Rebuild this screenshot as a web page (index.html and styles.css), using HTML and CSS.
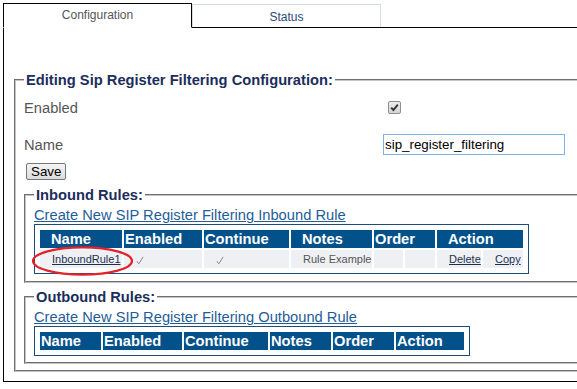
FILE: index.html
```html
<!DOCTYPE html>
<html lang="en">
<head>
<meta charset="utf-8">
<title>Sip Register Filtering</title>
<link rel="stylesheet" href="styles.css">
</head>
<body>
<div class="page">
  <div class="tabs">
    <div class="tab tab-active">Configuration</div>
    <div class="tab tab-idle">Status</div>
  </div>
  <div class="panel">
    <fieldset class="fs fs-outer">
      <legend class="lg">Editing Sip Register Filtering Configuration:</legend>
      <div class="form">
        <div class="label">Enabled</div>
        <div class="value">
          <span class="chk"><svg width="11" height="11" viewBox="0 0 11 11"><path d="M2.2 5.6 L4.4 8 L8.8 2.6" fill="none" stroke="#333" stroke-width="1.9"/></svg></span>
        </div>
        <div class="label">Name</div>
        <div class="value"><input class="text" type="text" value="sip_register_filtering"></div>
      </div>
      <button class="btn" type="button">Save</button>

      <fieldset class="fs fs-inner fs-in">
        <legend class="lg">Inbound Rules:</legend>
        <a class="create" href="#">Create New SIP Register Filtering Inbound Rule</a>
        <table class="rules">
          <thead>
            <tr>
              <th class="pad">Name</th>
              <th>Enabled</th>
              <th>Continue</th>
              <th class="pad">Notes</th>
              <th colspan="2">Order</th>
              <th colspan="2" class="pad">Action</th>
            </tr>
          </thead>
          <tbody>
            <tr>
              <td class="w-name mark-cell"><a class="cell-link" href="#">InboundRule1</a><svg class="mark" width="103" height="32" viewBox="0 0 103 32"><ellipse cx="51.5" cy="16" rx="49.5" ry="13.6" fill="none" stroke="#e1232b" stroke-width="2.2"/></svg></td>
              <td class="w-en"><svg class="tick" width="8" height="9" viewBox="0 0 8 9"><path d="M0.8 5.2 L2.8 7.8 L7.2 0.8" fill="none" stroke="#8a8a8a" stroke-width="1"/></svg></td>
              <td class="w-co"><svg class="tick" width="8" height="9" viewBox="0 0 8 9"><path d="M0.8 5.2 L2.8 7.8 L7.2 0.8" fill="none" stroke="#8a8a8a" stroke-width="1"/></svg></td>
              <td class="w-no note">Rule Example</td>
              <td class="w-o1"></td>
              <td class="w-o2"></td>
              <td class="w-del"><a class="cell-link" href="#">Delete</a></td>
              <td class="w-cp"><a class="cell-link" href="#">Copy</a></td>
            </tr>
          </tbody>
        </table>
      </fieldset>

      <fieldset class="fs fs-inner fs-out">
        <legend class="lg">Outbound Rules:</legend>
        <a class="create" href="#">Create New SIP Register Filtering Outbound Rule</a>
        <table class="rules">
          <thead>
            <tr>
              <th class="o-name">Name</th>
              <th class="o-en">Enabled</th>
              <th class="o-co">Continue</th>
              <th class="o-no">Notes</th>
              <th class="o-or">Order</th>
              <th class="o-ac">Action</th>
            </tr>
          </thead>
        </table>
      </fieldset>
    </fieldset>
  </div>
</div>
</body>
</html>
```

FILE: styles.css
```css
html, body {
  margin: 0;
  padding: 0;
  background: #fff;
  overflow: hidden;
}

body {
  font-family: "Liberation Sans", Arial, sans-serif;
  font-size: 14.7px;
  color: #555;
}

.page {
  padding: 3px 0 0 3px;
  width: 680px;
}

/* Tabs */
.tabs {
  display: flex;
  height: 24px;
}

.tab {
  box-sizing: border-box;
  width: 189px;
  display: flex;
  align-items: center;
  justify-content: center;
  font-size: 12px;
  background: #fff;
}

.tab-active {
  height: 25px;
  border: 1px solid #000;
  border-bottom: 1px solid #fff;
  color: #555;
  position: relative;
  z-index: 1;
  padding-bottom: 1px;
}

.tab-idle {
  margin-top: 1px;
  height: 23px;
  border: 1px solid #d5dae6;
  border-bottom: none;
  color: #2c4a77;
  padding-top: 1px;
}

/* Panel */
.panel {
  border: 1px solid #000;
  border-right: none;
  padding: 0 0 9px 10px;
}

/* Fieldsets */
.fs {
  margin: 0;
  min-width: 0;
  border: 2px groove #c4c4c4;
  padding: 0 0 6px 8px;
}

.fs-outer {
  margin-top: 43px;
  padding-bottom: 6px;
}

.fs-in {
  margin-top: 6px;
  padding-bottom: 7px;
}

.fs-out {
  margin-top: 5px;
  padding-bottom: 6px;
}

.lg {
  padding: 0 2px;
  font-weight: bold;
  font-size: 14.7px;
  line-height: 18px;
  color: #1c2d5c;
}

/* Form rows */
.form {
  display: grid;
  grid-template-columns: 359px auto;
  grid-auto-rows: 37px;
  align-items: center;
}

.label {
  color: #555;
}

.value {
  display: flex;
  align-items: center;
}

.chk {
  box-sizing: border-box;
  width: 13px;
  height: 13px;
  margin-left: 5px;
  margin-top: -1px;
  border: 1px solid #8e8e8e;
  border-radius: 2px;
  background: linear-gradient(#ececec, #d4d4d4);
  display: flex;
  align-items: center;
  justify-content: center;
}

.text {
  box-sizing: border-box;
  width: 182px;
  height: 21px;
  margin: 0;
  padding: 0 1px;
  border: 1px solid #7fb0e6;
  font-family: "Liberation Sans", Arial, sans-serif;
  font-size: 13.33px;
  color: #000;
  background: #fff;
  outline: none;
}

.btn {
  display: block;
  box-sizing: border-box;
  height: 17px;
  margin: 0 0 0 2px;
  padding: 0 4px;
  border: 1px solid #6f7884;
  border-radius: 2px;
  background: linear-gradient(#f4f4f4, #dcdcdc);
  font-family: "Liberation Sans", Arial, sans-serif;
  font-size: 13.33px;
  line-height: 15px;
  color: #000;
}

/* Links */
.create {
  display: block;
  width: max-content;
  margin-top: 3px;
  line-height: 17px;
  font-size: 14.7px;
  color: #1f5c98;
  text-decoration: underline;
}

/* Rule tables */
.rules {
  border-collapse: separate;
  border-spacing: 2px;
  border: 1px solid #1d4b7a;
  padding: 3px;
}

.rules th {
  box-sizing: border-box;
  height: 18px;
  padding: 0 0 0 1px;
  background: #03518a;
  color: #fff;
  font-weight: bold;
  font-size: 14.7px;
  line-height: 18px;
  text-align: left;
  white-space: nowrap;
}

.rules th.pad {
  padding-left: 11px;
}

.rules td {
  box-sizing: border-box;
  height: 18px;
  padding: 0 0 0 12px;
  background: #eef0f4;
  font-size: 11px;
  line-height: 18px;
  white-space: nowrap;
  color: #555;
}

.cell-link {
  color: #1e3050;
  text-decoration: underline;
}

.note {
  color: #5a5a5a;
}

.tick {
  display: inline-block;
  vertical-align: middle;
}

.mark-cell {
  position: relative;
}

.mark {
  position: absolute;
  left: -9px;
  top: -5px;
  pointer-events: none;
}

.w-name { width: 82px; }
.w-en { width: 78px; }
.w-co { width: 85px; }
.w-no { width: 81px; }
.w-o1 { width: 29px; }
.w-o2 { width: 30px; }
.w-del { width: 44px; }
.w-cp { width: 40px; }

.o-name { width: 61px; }
.o-en { width: 79px; }
.o-co { width: 84px; }
.o-no { width: 61px; }
.o-or { width: 61px; }
.o-ac { width: 68px; }
```
